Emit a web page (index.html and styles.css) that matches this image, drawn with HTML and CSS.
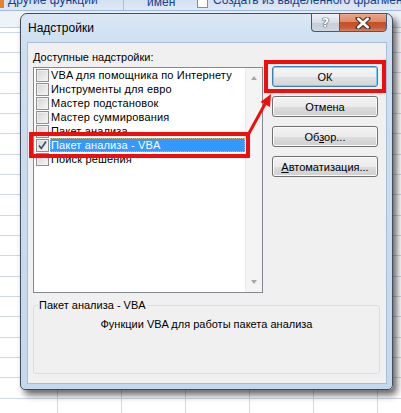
FILE: index.html
```html
<!DOCTYPE html>
<html lang="ru">
<head>
<meta charset="utf-8">
<title>Надстройки</title>
<link rel="stylesheet" href="styles.css">
</head>
<body>
<div class="excel">
  <div class="ribbon">
    <span class="rb-icon"></span>
    <span class="rb-text rb-t1">Другие функции</span>
    <span class="rb-sep"></span>
    <span class="rb-text rb-t2">имен</span>
    <span class="rb-tbl"></span>
    <span class="rb-text rb-t3">Создать из выделенного фрагмента</span>
  </div>
  <div class="fbar"></div>
  <div class="grid"></div>
</div>

<div class="dialog">
  <div class="titlebar">
    <span class="title">Надстройки</span>
    <div class="caption">
      <span class="cb help">?</span>
      <span class="cb close">
        <svg width="16" height="12" viewBox="0 0 16 12"><path d="M3 1.5 L13 10.5 M13 1.5 L3 10.5" stroke="#4a3a36" stroke-width="5" stroke-linecap="round"/><path d="M3.3 1.8 L12.7 10.2 M12.7 1.8 L3.3 10.2" stroke="#ffffff" stroke-width="2.6" stroke-linecap="round"/></svg>
      </span>
    </div>
  </div>
  <div class="client">
    <div class="top">
      <div class="left">
        <div class="label"><u>Д</u>оступные надстройки:</div>
        <div class="listbox">
          <ul class="items">
            <li><span class="chk"></span><span class="txt">VBA для помощника по Интернету</span></li>
            <li><span class="chk"></span><span class="txt">Инструменты для евро</span></li>
            <li><span class="chk"></span><span class="txt">Мастер подстановок</span></li>
            <li><span class="chk"></span><span class="txt">Мастер суммирования</span></li>
            <li><span class="chk"></span><span class="txt">Пакет анализа</span></li>
            <li class="sel"><span class="chk on"><svg width="11" height="11" viewBox="0 0 11 11"><path d="M2 5.5 L4.3 8.5 L9 1.5" fill="none" stroke="#3b4a6b" stroke-width="1.6"/></svg></span><span class="txt">Пакет анализа - VBA</span></li>
            <li><span class="chk"></span><span class="txt">Поиск решения</span></li>
          </ul>
          <div class="scroll"><span class="arr up"></span><span class="arr down"></span></div>
        </div>
      </div>
      <div class="buttons">
        <button class="btn default">ОК</button>
        <button class="btn">Отмена</button>
        <button class="btn">Об<u>з</u>ор...</button>
        <button class="btn"><u>А</u>втоматизация...</button>
      </div>
    </div>
    <fieldset class="group">
      <legend>Пакет анализа - VBA</legend>
      <p class="desc">Функции VBA для работы пакета анализа</p>
    </fieldset>
  </div>
</div>

<svg class="annot" width="401" height="413" viewBox="0 0 401 413">
  <rect x="31" y="134" width="217" height="22" fill="none" stroke="#f20d0d" stroke-width="4"/>
  <rect x="266" y="62" width="118" height="29" fill="none" stroke="#f20d0d" stroke-width="4"/>
  <line x1="248" y1="135" x2="265" y2="104" stroke="#f20d0d" stroke-width="3"/>
  <polygon points="271,94 270,107 260.5,102" fill="#f20d0d"/>
</svg>
</body>
</html>
```
FILE: styles.css
```css
* { box-sizing: border-box; }
html, body { margin: 0; padding: 0; }
body {
  width: 401px;
  height: 413px;
  overflow: hidden;
  position: relative;
  font-family: "Liberation Sans", Arial, sans-serif;
  font-size: 11px;
  color: #000;
  background: #fff;
}

/* Excel background */
.excel { display: flex; flex-direction: column; height: 413px; }
.ribbon {
  height: 11px;
  flex: none;
  display: flex;
  align-items: flex-start;
  overflow: hidden;
  white-space: nowrap;
  background: linear-gradient(#d3e1f2, #dfe9f6);
  border-bottom: 1px solid #9ebbdc;
  color: #15428b;
  font-size: 12px;
  line-height: 12px;
}
.rb-text { margin-top: -6px; flex: none; }
.rb-icon { width: 4px; height: 8px; margin-right: 4px; background: #e2842a; flex: none; }
.rb-t1 { width: 115px; }
.rb-sep { width: 1px; height: 11px; background: #a9c0dc; flex: none; }
.rb-t2 { width: 50px; margin-left: 23px; margin-top: -4px; }
.rb-tbl { width: 11px; height: 8px; margin-right: 5px; border: 1px solid #7c8ea5; border-top: none; background: #fff; flex: none; }
.fbar {
  height: 17px;
  flex: none;
  background: #eef3f9;
  border-bottom: 1px solid #c2d0e0;
}
.grid {
  flex: 1;
  background-color: #fff;
  background-image:
    repeating-linear-gradient(to bottom, #d0d7e5 0 1px, transparent 1px 20px, #d0d7e5 20px 21px, transparent 21px 41px, #d0d7e5 41px 42px, transparent 42px 61px),
    linear-gradient(to right, #d0d7e5 1px, transparent 1px);
  background-size: 100% 61px, 64px 100%;
  background-position: 0 24px, 57px 0;
}

/* Dialog window */
.dialog {
  position: absolute;
  left: 20px;
  top: 13px;
  width: 373px;
  height: 377px;
  border: 1px solid #434e5a;
  border-radius: 7px 7px 5px 5px;
  background: linear-gradient(#dbe7f4, #cddff1 30px, #c4d8ee);
  box-shadow: 4px 5px 7px rgba(0, 0, 0, 0.6);
  display: flex;
  flex-direction: column;
}
.titlebar { height: 28px; flex: none; display: flex; align-items: flex-start; }
.title {
  flex: 1;
  padding-left: 7px;
  font-size: 12px;
  line-height: 28px;
  color: #000;
}
.caption { display: flex; margin-top: -1px; margin-right: 5px; }
.cb {
  height: 19px;
  border: 1px solid #4e5967;
  display: flex;
  align-items: center;
  justify-content: center;
}
.help {
  width: 28px;
  border-right: none;
  border-radius: 0 0 0 4px;
  background: linear-gradient(#eef2f7, #d6dee8 50%, #c4cdd8 51%, #cfd8e2);
  color: #fff;
  font-family: "DejaVu Sans", sans-serif;
  font-weight: bold;
  font-size: 13px;
  text-shadow: 0 0 1px #3d4650, 0 0 1px #3d4650, 0 0 1px #3d4650;
}
.close {
  width: 48px;
  border-radius: 0 0 4px 0;
  background: linear-gradient(#eaa88b, #dc8b6a 45%, #c4502a 50%, #c85a32 80%, #d98160);
}

.client {
  flex: 1;
  margin: 0 5px 5px 6px;
  border: 1px solid #a9bdd4;
  background: #f0f0f0;
  padding: 8px 6px 9px 5px;
  display: flex;
  flex-direction: column;
}
.top { display: flex; align-items: flex-start; }
.left { width: 230px; flex: none; }
.label { height: 13px; line-height: 13px; }
.listbox {
  margin-top: 3px;
  height: 226px;
  border: 1px solid #828790;
  background: #fff;
  display: flex;
}
.items { list-style: none; margin: 0; padding: 0; flex: 1; }
.items li { height: 14px; display: flex; align-items: center; }
.chk {
  width: 13px;
  height: 13px;
  margin-left: 2px;
  margin-right: 1px;
  flex: none;
  border: 1px solid #8e8f8f;
  background: linear-gradient(135deg, #d4d4d4, #f6f6f6);
  box-shadow: inset 0 0 0 1px #f0f0f0;
  display: flex;
  align-items: center;
  justify-content: center;
}
.txt { flex: 1; height: 14px; line-height: 14px; padding-left: 1px; white-space: nowrap; letter-spacing: 0.15px; }
.sel .txt { background: #3399ff; color: #fff; outline: 1px dotted #d9b27a; outline-offset: -1px; }
.scroll {
  width: 17px;
  flex: none;
  background: #f4f4f4;
  border-left: 1px solid #ebebeb;
  display: flex;
  flex-direction: column;
  justify-content: space-between;
  align-items: center;
  padding: 8px 0;
}
.arr { width: 0; height: 0; border-left: 3.5px solid transparent; border-right: 3.5px solid transparent; }
.arr.up { border-bottom: 4px solid #a6a6a6; }
.arr.down { border-top: 4px solid #a6a6a6; }

.buttons {
  width: 106px;
  margin-left: 9px;
  margin-top: 15px;
  flex: none;
  display: flex;
  flex-direction: column;
  gap: 9px;
}
.btn {
  height: 21px;
  padding: 0;
  border: 1px solid #707070;
  border-radius: 3px;
  background: linear-gradient(#f2f2f2, #ebebeb 50%, #dddddd 51%, #cfcfcf);
  box-shadow: inset 0 0 0 1px #fbfbfb;
  font-family: "Liberation Sans", Arial, sans-serif;
  font-size: 11px;
  color: #000;
  text-align: center;
}
.btn.default {
  border-color: #3c7fb1;
  box-shadow: inset 0 0 0 1px #6fd3f6;
  background: linear-gradient(#f4f5f6, #eceef0 50%, #dfe1e3 51%, #d3d5d8);
}

.group {
  flex: 1;
  min-width: 0;
  margin: 6px 0 0;
  padding: 0 4px;
  border: 1px solid #d5dfe5;
  border-radius: 3px;
}
.group legend { padding: 0 1px; margin-left: 0; line-height: 13px; }
.desc { margin: 6px 0 0; text-align: center; line-height: 13px; }

.annot { position: absolute; left: 0; top: 0; pointer-events: none; }
```
